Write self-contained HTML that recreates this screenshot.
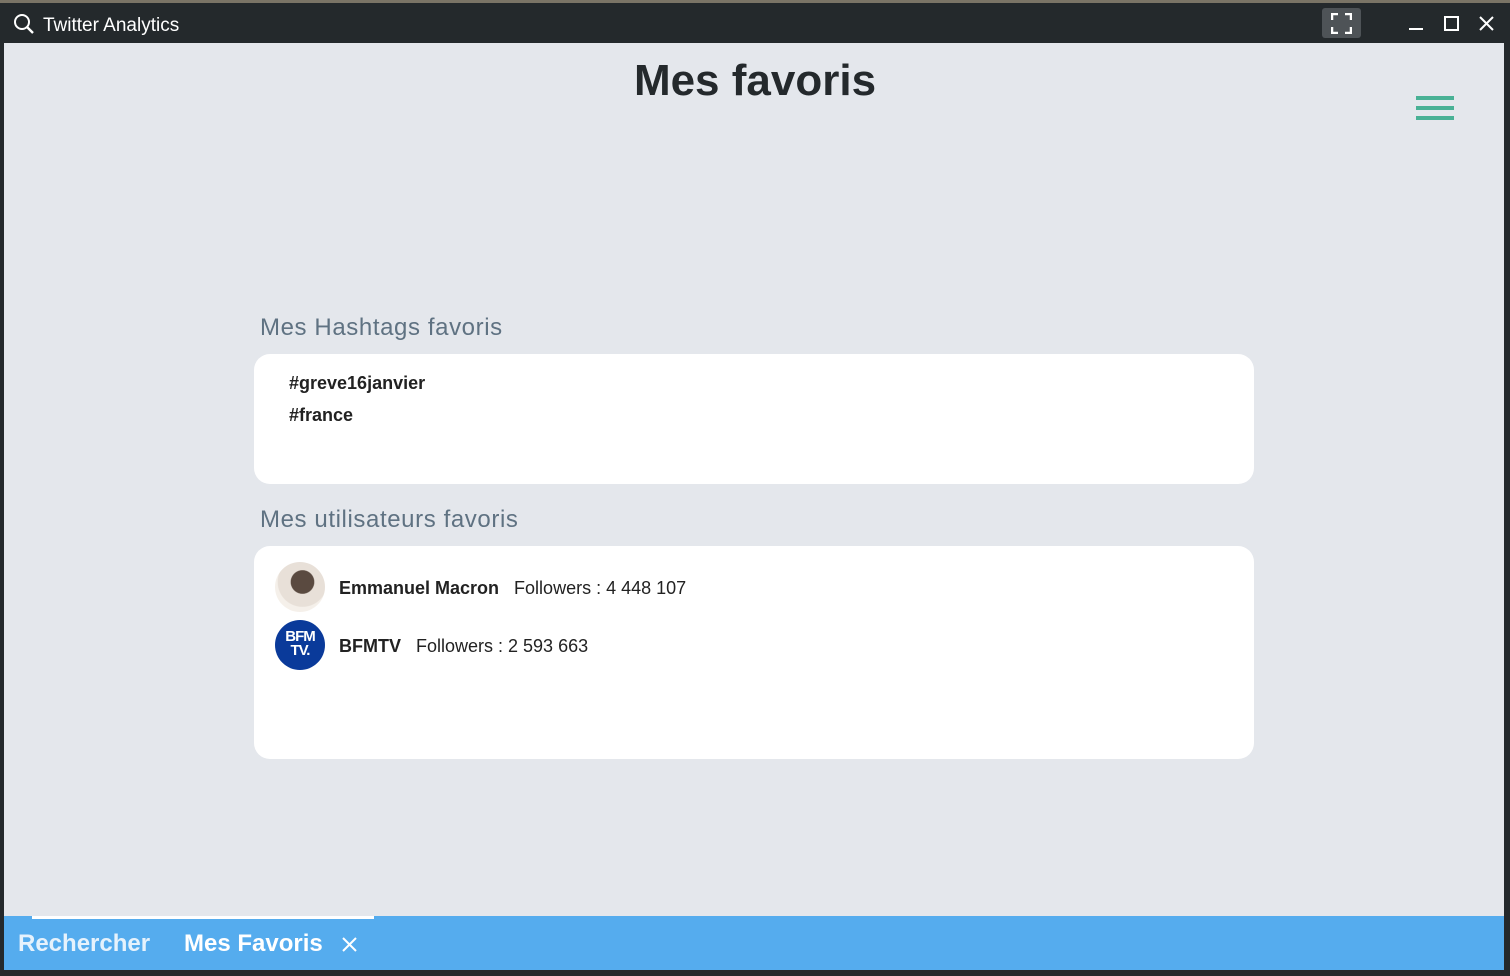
<!DOCTYPE html>
<html><head><meta charset="utf-8"><style>
*{margin:0;padding:0;box-sizing:border-box}
body{width:1510px;height:976px;background:#24292c;position:relative;overflow:hidden;font-family:"Liberation Sans",sans-serif}
.strip{position:absolute;left:0;top:0;width:1510px;height:3px;background:#7a7466}
.title{position:absolute;left:43px;top:15px;color:#fff;font-size:19px}
.main{position:absolute;left:4px;top:43px;width:1500px;height:873px;background:#e4e7ec}
h1{position:absolute;left:0;width:1510px;top:56px;text-align:center;font-size:44px;font-weight:bold;color:#24292c;letter-spacing:0px}
.bar{position:absolute;left:1416px;width:38px;height:4px;background:#49b195}
.h2{position:absolute;left:260px;font-size:24px;color:#5f7282;letter-spacing:0.6px}
.card{position:absolute;left:254px;width:1000px;background:#fff;border-radius:16px}
.tag{position:absolute;left:289px;font-size:18px;font-weight:bold;color:#222}
.user{position:absolute;left:339px;font-size:18px;color:#222}
.tabs{position:absolute;left:4px;top:916px;width:1500px;height:54px;background:#55acee}
.tab{position:absolute;top:930px;font-size:24px;font-weight:bold;color:#fff}
</style></head><body>
<div class="strip"></div>
<svg style="position:absolute;left:13px;top:13px" width="22" height="22" viewBox="0 0 22 22"><circle cx="9" cy="9" r="7" fill="none" stroke="#fff" stroke-width="2"/><path d="M14 14l6 6" stroke="#fff" stroke-width="2.4"/></svg>
<div class="title">Twitter Analytics</div>
<div style="position:absolute;left:1322px;top:8px;width:39px;height:30px;background:#4e5357;border-radius:3px"></div>
<svg style="position:absolute;left:1331px;top:13px" width="21" height="21" viewBox="0 0 21 21" fill="none" stroke="#fff" stroke-width="2.5"><path d="M1 7V1h6M14 1h6v6M20 14v6h-6M7 20H1v-6"/></svg>
<div style="position:absolute;left:1409px;top:28px;width:14px;height:2px;background:#fff"></div>
<div style="position:absolute;left:1444px;top:16px;width:15px;height:15px;border:2px solid #fff"></div>
<svg style="position:absolute;left:1479px;top:16px" width="15" height="15"><path d="M1 1l13 13M14 1L1 14" stroke="#fff" stroke-width="2"/></svg>
<div class="main"></div>
<h1>Mes favoris</h1>
<div class="bar" style="top:96px"></div><div class="bar" style="top:106px"></div><div class="bar" style="top:116px"></div>
<div class="h2" style="top:314px">Mes Hashtags favoris</div>
<div class="card" style="top:354px;height:130px"></div>
<div class="tag" style="top:373px">#greve16janvier</div>
<div class="tag" style="top:405px">#france</div>
<div class="h2" style="top:506px">Mes utilisateurs favoris</div>
<div class="card" style="top:546px;height:213px"></div>
<div style="position:absolute;left:275px;top:562px;width:50px;height:50px;border-radius:50%;background:radial-gradient(circle at 55% 40%,#5a4a40 0 28%,#e8e0d8 30% 60%,#f5f0ea 62%)"></div>
<div style="position:absolute;left:275px;top:620px;width:50px;height:50px;border-radius:50%;background:#0a3a9a;color:#fff;font-weight:bold;font-size:15px;line-height:14px;text-align:center;padding-top:10px;letter-spacing:-1px">BFM<br>TV.</div>
<div class="user" style="top:578px"><b>Emmanuel Macron</b>&nbsp;&nbsp; Followers : 4 448 107</div>
<div class="user" style="top:636px"><b>BFMTV</b>&nbsp;&nbsp; Followers : 2 593 663</div>
<div class="tabs"></div>
<div style="position:absolute;left:32px;top:916px;width:342px;height:3px;background:#fff"></div>
<div class="tab" style="left:18px;color:#e6f2fc">Rechercher</div>
<div class="tab" style="left:184px">Mes Favoris</div>
<svg style="position:absolute;left:342px;top:937px" width="15" height="15"><path d="M1 1l13 13M14 1L1 14" stroke="#fff" stroke-width="2"/></svg>
</body></html>
